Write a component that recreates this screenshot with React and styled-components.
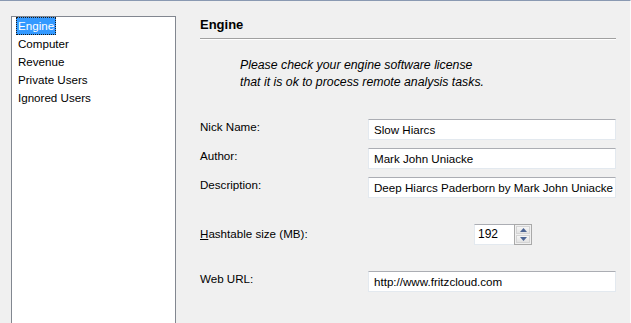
import React from "react";
import styled, { createGlobalStyle } from "styled-components";

const Global = createGlobalStyle`
  html, body { margin: 0; padding: 0; background: #f0f0f0; }
  body { font-family: "Liberation Sans", Arial, sans-serif; color: #000; }
`;

const Window = styled.div`
  width: 631px;
  height: 323px;
  box-sizing: border-box;
  overflow: hidden;
  display: flex;
  background: #f0f0f0;
  border-top: 1px solid #8a99b2;
  border-right: 1px solid #fbfbfb;
  font-size: 11.6px;
`;

const Sidebar = styled.div`
  width: 176px;
  flex: none;
  box-sizing: border-box;
  padding: 15px 0 0 11px;
`;

const ListBox = styled.div`
  width: 165px;
  height: 330px;
  box-sizing: border-box;
  border: 1px solid #828790;
  background: #fff;
  padding: 0 0 0 4px;
  display: flex;
  flex-direction: column;
  align-items: flex-start;
`;

const ListItem = styled.div`
  height: 18px;
  box-sizing: border-box;
  line-height: 16px;
  padding: 0 1px;
  border: 1px ${(p) => (p.$selected ? "dotted #1a1a1a" : "solid transparent")};
  background: ${(p) => (p.$selected ? "#3399ff" : "transparent")};
  color: ${(p) => (p.$selected ? "#fff" : "#000")};
  white-space: nowrap;
`;

const Content = styled.div`
  flex: 1;
  box-sizing: border-box;
  padding: 16px 14px 0 24px;
`;

const Title = styled.div`
  font-weight: bold;
  font-size: 13px;
  line-height: 16px;
  padding-bottom: 5px;
  border-bottom: 1px solid #a0a0a0;
  box-shadow: 0 1px 0 #ffffff;
`;

const Notice = styled.div`
  margin-top: 18px;
  padding-left: 40px;
  font-style: italic;
  font-size: 12.3px;
  line-height: 17px;
`;

const Form = styled.div`
  margin-top: 28px;
  display: flex;
  flex-direction: column;
`;

const Row = styled.div`
  display: grid;
  grid-template-columns: 168px 1fr;
  align-items: start;
  margin-top: ${(p) => p.$gap}px;
`;

const Label = styled.div`
  padding-top: ${(p) => p.$offset ?? 1}px;
  line-height: 14px;
  white-space: nowrap;
`;

const Mnemonic = styled.span`
  text-decoration: underline;
`;

const TextField = styled.div`
  height: 21px;
  box-sizing: border-box;
  border: 1px solid #e3e9ef;
  border-top-color: #abadb3;
  background: #fff;
  padding: 0 5px;
  line-height: 19px;
  white-space: nowrap;
  overflow: hidden;
`;

const Spinner = styled.div`
  margin-left: 106px;
  width: 58px;
  height: 21px;
  box-sizing: border-box;
  border: 1px solid #e3e9ef;
  border-top-color: #abadb3;
  background: #fff;
  display: flex;
`;

const SpinValue = styled.div`
  flex: 1;
  padding-left: 3px;
  line-height: 19px;
  font-size: 12px;
`;

const SpinButtons = styled.div`
  width: 18px;
  margin: -1px -1px -1px 0;
  box-sizing: border-box;
  border: 1px solid #a9a9a9;
  padding: 1px;
  display: flex;
  flex-direction: column;
  gap: 1px;
  background: #f0f0f0;
`;

const SpinButton = styled.div`
  flex: 1;
  border: 1px solid #d4d4d4;
  background: linear-gradient(#f6f6f6, #e2e2e2);
  display: flex;
  align-items: center;
  justify-content: center;
`;

const Arrow = ({ down }) => (
  <svg width="7" height="4" viewBox="0 0 7 4">
    <path d={down ? "M0 0H7L3.5 4Z" : "M0 4H7L3.5 0Z"} fill="#4d6594" />
  </svg>
);

const items = ["Engine", "Computer", "Revenue", "Private Users", "Ignored Users"];

export default function App() {
  return (
    <>
      <Global />
      <Window>
        <Sidebar>
          <ListBox>
            {items.map((it, i) => (
              <ListItem key={it} $selected={i === 0}>
                {it}
              </ListItem>
            ))}
          </ListBox>
        </Sidebar>
        <Content>
          <Title>Engine</Title>
          <Notice>
            Please check your engine software license
            <br />
            that it is ok to process remote analysis tasks.
          </Notice>
          <Form>
            <Row $gap={0}>
              <Label>Nick Name:</Label>
              <TextField>Slow Hiarcs</TextField>
            </Row>
            <Row $gap={8}>
              <Label>Author:</Label>
              <TextField>Mark John Uniacke</TextField>
            </Row>
            <Row $gap={8}>
              <Label>Description:</Label>
              <TextField>Deep Hiarcs Paderborn by Mark John Uniacke</TextField>
            </Row>
            <Row $gap={26}>
              <Label $offset={3}>
                <Mnemonic>H</Mnemonic>ashtable size (MB):
              </Label>
              <Spinner>
                <SpinValue>192</SpinValue>
                <SpinButtons>
                  <SpinButton>
                    <Arrow />
                  </SpinButton>
                  <SpinButton>
                    <Arrow down />
                  </SpinButton>
                </SpinButtons>
              </Spinner>
            </Row>
            <Row $gap={26}>
              <Label>Web URL:</Label>
              <TextField>http://www.fritzcloud.com</TextField>
            </Row>
          </Form>
        </Content>
      </Window>
    </>
  );
}
